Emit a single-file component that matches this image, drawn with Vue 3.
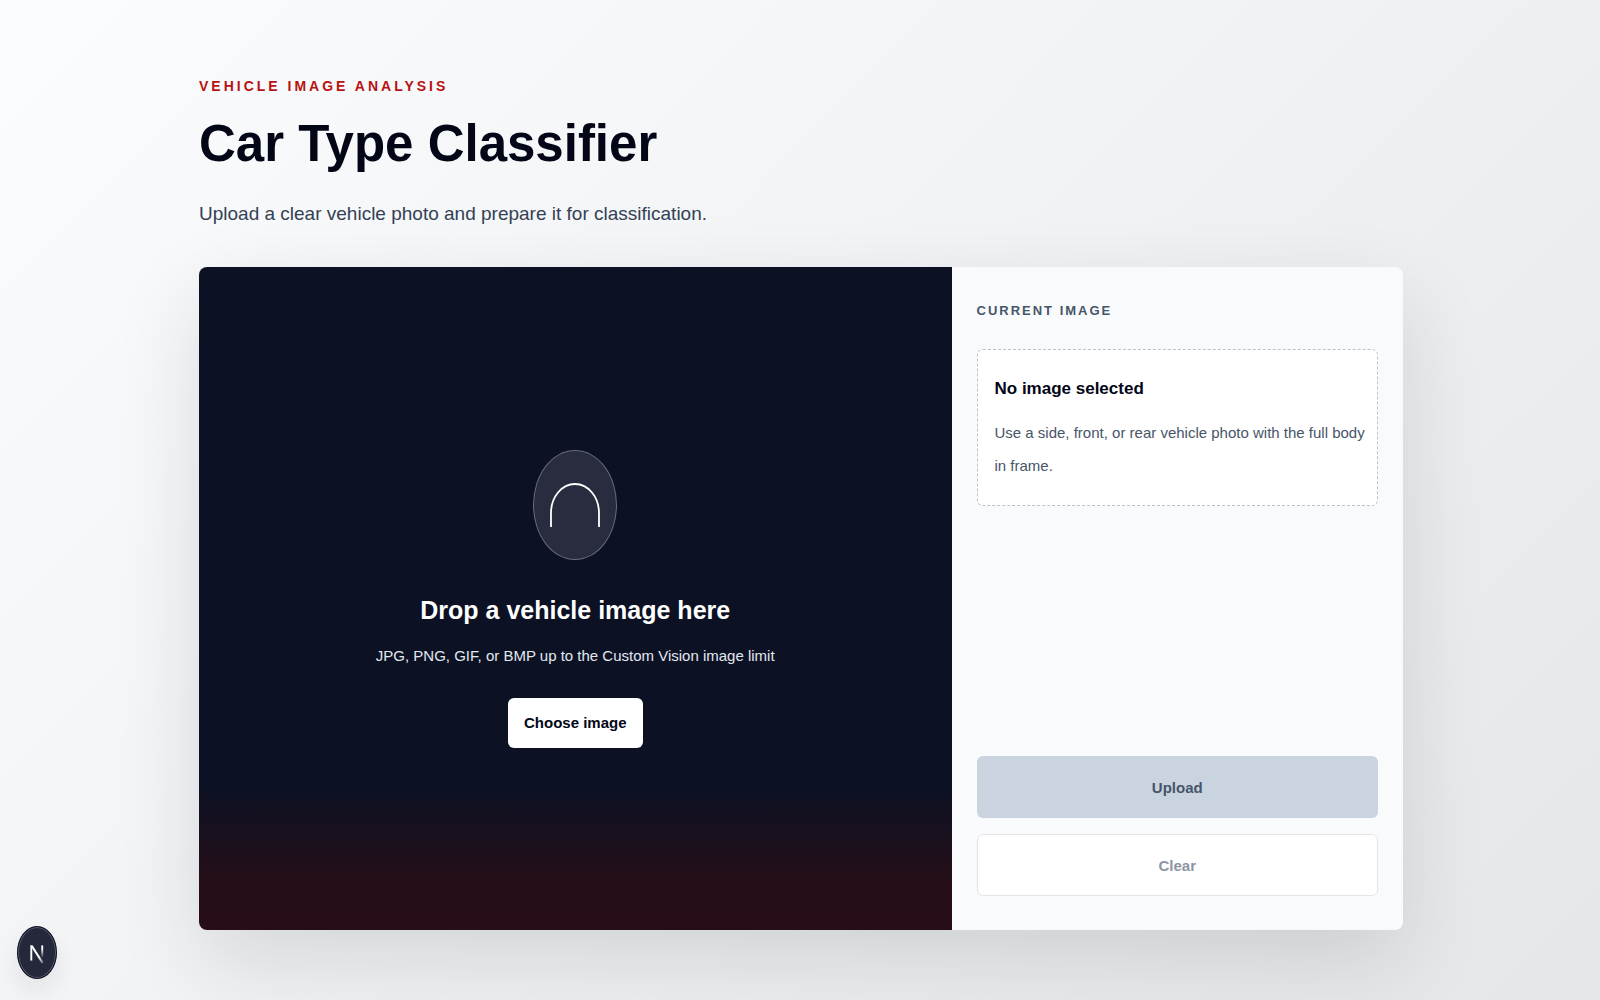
<template>
    <main class="page">
        <div class="container">
            <header class="intro">
                <p class="eyebrow">Vehicle image analysis</p>
                <h1>Car Type Classifier</h1>
                <p class="lead">Upload a clear vehicle photo and prepare it for classification.</p>
            </header>

            <section class="card">
                <div class="dropzone" @dragover.prevent @drop.prevent="onDrop">
                    <div class="drop-icon">
                        <svg viewBox="0 0 50 44" aria-hidden="true">
                            <path d="M1 44V30A24 29 0 0 1 49 30V44" fill="none" stroke="#fff" stroke-width="1.8" />
                        </svg>
                    </div>
                    <h2>Drop a vehicle image here</h2>
                    <p class="hint">JPG, PNG, GIF, or BMP up to the Custom Vision image limit</p>
                    <button type="button" class="choose" @click="fileInput.click()">Choose image</button>
                    <input ref="fileInput" type="file" accept="image/*" aria-label="Vehicle image" hidden @change="onPick" />
                </div>

                <aside class="panel">
                    <h3>Current image</h3>
                    <div class="status">
                        <p class="status-title">{{ file ? file.name : 'No image selected' }}</p>
                        <p class="status-text">Use a side, front, or rear vehicle photo with the full body in frame.</p>
                    </div>
                    <div class="actions">
                        <button type="button" class="upload" :disabled="!file">Upload</button>
                        <button type="button" class="clear" :disabled="!file" @click="clearFile">Clear</button>
                    </div>
                </aside>
            </section>
        </div>

        <button type="button" class="dev-badge" aria-label="Open developer tools">
            <svg viewBox="0 0 40 53" aria-hidden="true">
                <defs>
                    <linearGradient id="stem" x1="0" y1="0" x2="0" y2="1">
                        <stop offset="0.3" stop-color="#fff" />
                        <stop offset="1" stop-color="#fff" stop-opacity="0.1" />
                    </linearGradient>
                    <linearGradient id="slash" x1="0" y1="0" x2="1" y2="1">
                        <stop offset="0.65" stop-color="#fff" />
                        <stop offset="1" stop-color="#fff" stop-opacity="0.2" />
                    </linearGradient>
                </defs>
                <path d="M13 19h2v16h-2z" fill="#fff" />
                <path d="M13 19h2.500L27 37l-2 1.200z" fill="url(#slash)" />
                <path d="M24.500 19h2v12.500h-2z" fill="url(#stem)" />
            </svg>
        </button>
    </main>
</template>

<script setup>
import { ref } from 'vue';

const fileInput = ref(null);
const file = ref(null);

const onPick = (event) => {
    file.value = event.target.files[0] || null;
};

const onDrop = (event) => {
    file.value = event.dataTransfer.files[0] || null;
};

const clearFile = () => {
    file.value = null;
    fileInput.value.value = '';
};
</script>

<style>
body {
    margin: 0;
}
</style>

<style scoped>
* {
    box-sizing: border-box;
}

.page {
    min-height: 100vh;
    padding: 70px 24px 70px 26px;
    font-family: "Liberation Sans", Arial, sans-serif;
    color: #020617;
    background: linear-gradient(135deg, #fbfcfd 0%, #f2f3f5 45%, #e5e6e9 100%);
}

.container {
    max-width: 1204px;
    margin: 0 auto;
}

h1,
h2,
h3,
p {
    margin: 0;
}

button {
    font-family: inherit;
    cursor: pointer;
}

button:disabled {
    cursor: not-allowed;
}

.eyebrow {
    font-size: 14px;
    line-height: 32px;
    font-weight: 700;
    letter-spacing: 3px;
    text-transform: uppercase;
    color: #b91212;
}

h1 {
    font-size: 51px;
    line-height: 84px;
    font-weight: 700;
    color: #020617;
}

.lead {
    margin-top: 8px;
    font-size: 19px;
    line-height: 40px;
    color: #334155;
}

.card {
    display: grid;
    grid-template-columns: 5fr 3fr;
    min-height: 663px;
    margin-top: 33px;
    border-radius: 8px;
    overflow: hidden;
    background: #f8fafc;
    box-shadow: 0 32px 84px rgba(15, 30, 42, 0.13);
}

.dropzone {
    display: flex;
    flex-direction: column;
    align-items: center;
    justify-content: center;
    padding: 32px;
    text-align: center;
    color: #fff;
    background: linear-gradient(to top, #270d17 0%, #250e18 7%, #0c1224 22%, #0c1224 100%);
}

.drop-icon {
    display: flex;
    align-items: center;
    justify-content: center;
    width: 84px;
    height: 110px;
    border: 1px solid rgba(255, 255, 255, 0.3);
    border-radius: 50%;
    background: #282c3e;
}

.drop-icon svg {
    width: 50px;
    height: 44px;
}

h2 {
    margin-top: 28px;
    font-size: 25px;
    line-height: 44px;
    font-weight: 700;
}

.hint {
    margin-top: 10px;
    font-size: 15px;
    line-height: 28px;
    color: #e2e8f0;
}

.choose {
    height: 50px;
    margin-top: 28px;
    padding: 0 16px;
    border: 0;
    border-radius: 6px;
    font-size: 15px;
    font-weight: 700;
    color: #020617;
    background: #fff;
}

.panel {
    display: flex;
    flex-direction: column;
    padding: 32px 25px 34px;
}

h3 {
    font-size: 13px;
    line-height: 24px;
    font-weight: 700;
    letter-spacing: 2px;
    text-transform: uppercase;
    color: #475569;
}

.status {
    margin-top: 26px;
    padding: 23px 12px 23px 17px;
    border: 1px dashed #b8c2d0;
    border-radius: 6px;
    background: #fff;
}

.status-title {
    font-size: 17px;
    line-height: 32px;
    font-weight: 700;
}

.status-text {
    margin-top: 11px;
    font-size: 15px;
    line-height: 33px;
    color: #475569;
}

.actions {
    display: flex;
    flex-direction: column;
    gap: 16px;
    margin-top: auto;
}

.actions button {
    height: 62px;
    border-radius: 6px;
    font-size: 15px;
    font-weight: 700;
}

.upload {
    border: 0;
    color: #475569;
    background: #c9d4e0;
}

.clear {
    border: 1px solid #e2e4ea;
    color: #8b95a3;
    background: #fff;
}

/* floats over the page in the corner */
.dev-badge {
    position: fixed;
    left: 17px;
    bottom: 21px;
    width: 40px;
    height: 53px;
    padding: 0;
    border: 1px solid #0c1020;
    border-radius: 50%;
    background: #24283a;
    box-shadow: inset 0 0 0 1px #5a5e70, 0 12px 24px rgba(15, 23, 42, 0.08);
}

.dev-badge svg {
    display: block;
    width: 100%;
    height: 100%;
}
</style>
